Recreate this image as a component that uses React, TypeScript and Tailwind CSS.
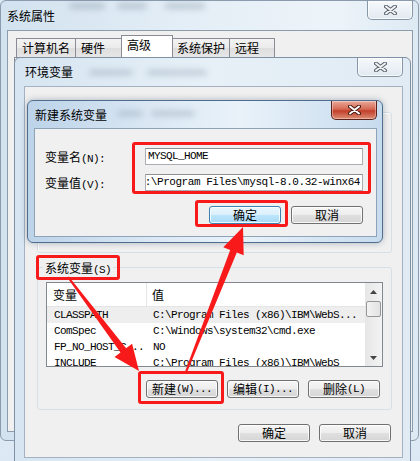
import React from "react"

const mono = "font-['Liberation_Mono',monospace] text-[11px] tracking-[-0.6px]"

function CloseX({ active, className = "" }: { active?: boolean; className?: string }) {
  return (
    <div
      className={`flex h-[19px] w-[46px] shrink-0 items-center justify-center rounded-b-[5px] border border-t-0 ${
        active
          ? "border-[#5e2119] bg-[linear-gradient(#eaa999,#d56a55_45%,#c23f2a_55%,#dc8e75)] shadow-[inset_0_0_0_1px_rgba(255,255,255,0.35)]"
          : "border-[#8797a8] bg-[linear-gradient(#f6f9fc,#e1e9f0)] shadow-[inset_0_0_0_1px_rgba(255,255,255,0.7)]"
      } ${className}`}
    >
      <svg width="13" height="10" viewBox="0 0 13 10">
        <path d="M2 1.5L11 8.5M11 1.5L2 8.5" stroke={active ? "#4a1a12" : "#5b636b"} strokeWidth="4" strokeLinecap="round" />
        <path d="M2 1.5L11 8.5M11 1.5L2 8.5" stroke={active ? "#ffffff" : "#f3f5f7"} strokeWidth="2" strokeLinecap="round" />
      </svg>
    </div>
  )
}

function Btn({ children, primary, className = "" }: { children: React.ReactNode; primary?: boolean; className?: string }) {
  return (
    <div
      className={`flex h-[18px] w-[72px] shrink-0 items-center justify-center rounded-[3px] border leading-none ${
        primary
          ? "border-[#3c7fb1] bg-[linear-gradient(#eaf6fd,#d9f0fc_50%,#bee6fd_50%,#a7d9f5)]"
          : "border-[#707070] bg-[linear-gradient(#f6f6f6,#ededed_50%,#e0e0e0_50%,#d5d5d5)]"
      } shadow-[inset_0_0_0_1px_rgba(255,255,255,0.8)] ${className}`}
    >
      {children}
    </div>
  )
}

// red annotation box
function Mark({ className }: { className: string }) {
  return <div className={`pointer-events-none absolute rounded-[3px] border-[3px] border-[#f81a1a] ${className}`} />
}

function Smudge({ className }: { className: string }) {
  return <div className={`rounded-full bg-[#7d8ea0] opacity-40 blur-[3px] ${className}`} />
}

const rows = [
  ["CLASSPATH", "C:\\Program Files (x86)\\IBM\\WebS..."],
  ["ComSpec", "C:\\Windows\\system32\\cmd.exe"],
  ["FP_NO_HOST_C...", "NO"],
  ["INCLUDE", "C:\\Program Files (x86)\\IBM\\WebS"],
]

const tabs = [
  { label: "计算机名", w: "w-[60px]" },
  { label: "硬件", w: "w-[47px]" },
  { label: "高级", w: "w-[52px]", active: true },
  { label: "系统保护", w: "w-[59px]" },
  { label: "远程", w: "w-[46px]" },
]

export default function App() {
  return (
    <div className="relative h-[461px] w-[420px] overflow-hidden bg-[linear-gradient(180deg,#dbe7f2,#e8f0f7_60%,#dce8f4)] font-['Noto_Sans_CJK_SC',sans-serif] text-[12px] text-black">
      {/* 系统属性 */}
      <div className="absolute left-0 top-0 h-[441px] w-[419px] rounded-[6px] border border-[#8a9bad] bg-[linear-gradient(90deg,#d2e2ef,#e4eef6_45%,#edf4f9_80%,#dde9f3)]">
        <div className="flex h-[29px] items-start">
          <span className="pl-[6px] pt-[7px] leading-[16px]">系统属性</span>
          <Smudge className="ml-[14px] mt-[2px] h-[6px] w-[36px]" />
          <Smudge className="ml-[12px] mt-[2px] h-[6px] w-[30px]" />
          <Smudge className="ml-[18px] mt-[2px] h-[6px] w-[40px]" />
          <CloseX className="ml-auto mr-[5px]" />
        </div>
        <div className="ml-[6px] h-[402px] w-[406px] border border-[#8d9cab] bg-[#f0f0f0] pt-[5px]">
          <div className="flex h-[21px] items-end pl-[9px]">
            {tabs.map((t) => (
              <div
                key={t.label}
                className={`-ml-px flex shrink-0 items-center border border-b-0 border-[#898c95] pl-[5px] leading-[16px] ${t.w} ${
                  t.active
                    ? "relative z-10 -mx-[1px] h-[22px] bg-white pb-[4px]"
                    : "h-[19px] bg-[linear-gradient(#f3f3f3,#ebebeb_50%,#dedede_50%,#e6e6e6)]"
                }`}
              >
                {t.label}
              </div>
            ))}
          </div>
          <div className="ml-[6px] h-[341px] w-[392px] border border-[#898c95] bg-[#f9f9f9]" />
        </div>
      </div>

      {/* 环境变量 */}
      <div className="absolute left-[14px] top-[57px] h-[410px] w-[397px] rounded-t-[6px] border border-[#7f91a4] bg-[linear-gradient(90deg,#d6e5f1,#e7f0f7_50%,#e0ebf4)]">
        <div className="flex h-[28px] items-start">
          <span className="pl-[10px] pt-[6px] leading-[16px]">环境变量</span>
          <Smudge className="ml-[16px] mt-[12px] h-[5px] w-[44px]" />
          <Smudge className="ml-[14px] mt-[12px] h-[5px] w-[60px]" />
          <CloseX className="ml-auto mr-[7px]" />
        </div>
        <div className="ml-[9px] h-[372px] w-[379px] border border-[#a3b1c0] bg-[#f0f0f0]">
          <div className="ml-[12px] mt-[25px] h-[141px] w-[355px] rounded-[3px] border border-[#d5dfe5] shadow-[inset_1px_1px_0_#ffffff]" />
          <fieldset className="ml-[12px] mt-[7px] h-[150px] w-[355px] rounded-[3px] border border-[#d5dfe5]">
            <legend className="ml-[5px] h-[15px]">
              <span className="relative block px-[2px] leading-[15px]">
                系统变量<span className={mono}>(S)</span>
                <Mark className="-left-[7px] -right-[7px] -top-[5px] -bottom-[2px]" />
              </span>
            </legend>
            <div className="ml-[8px] mt-[7px] flex h-[85px] w-[337px] overflow-hidden border border-[#828790] bg-white">
              <div className="flex-1">
                <div className="flex h-[24px] items-center border-b border-[#e5e5e5] leading-[23px]">
                  <div className="w-[100px] border-r border-[#e5e5e5] pl-[6px]">变量</div>
                  <div className="pl-[5px]">值</div>
                </div>
                {rows.map((r, i) => (
                  <div key={r[0]} className={`flex h-[16px] items-center whitespace-pre leading-[16px] ${mono} ${i === 0 ? "bg-[#eeeeee]" : ""}`}>
                    <div className="w-[100px] shrink-0 overflow-hidden pl-[7px]">{r[0]}</div>
                    <div className="pl-[6px]">{r[1]}</div>
                  </div>
                ))}
              </div>
              <div className="flex w-[17px] flex-col bg-[linear-gradient(90deg,#e6e6e6,#f3f3f3)]">
                <div className="flex h-[17px] items-center justify-center">
                  <svg width="7" height="4" viewBox="0 0 7 4"><path d="M3.5 0L7 4H0z" fill="#444" /></svg>
                </div>
                <div className="mx-[1px] mt-[1px] h-[16px] rounded-[2px] border border-[#979797] bg-[linear-gradient(90deg,#f3f3f3,#e2e2e2)]" />
                <div className="mt-auto flex h-[17px] items-center justify-center">
                  <svg width="7" height="4" viewBox="0 0 7 4"><path d="M0 0H7L3.5 4z" fill="#444" /></svg>
                </div>
              </div>
            </div>
            <div className="mt-[13px] flex justify-end gap-[9px] pr-[11px]">
              <div className="relative">
                <Btn>新建<span className={mono}>(W)...</span></Btn>
                <Mark className="-left-[8px] -right-[6px] -top-[9px] -bottom-[6px]" />
              </div>
              <Btn>编辑<span className={mono}>(I)...</span></Btn>
              <Btn>删除<span className={mono}>(L)</span></Btn>
            </div>
          </fieldset>
          <div className="mt-[14px] flex justify-end gap-[9px] pr-[11px]">
            <Btn>确定</Btn>
            <Btn>取消</Btn>
          </div>
        </div>
      </div>

      {/* 新建系统变量 */}
      <div className="absolute left-[27px] top-[100px] h-[143px] w-[356px] rounded-[6px] border border-[#4f6e8e] bg-[linear-gradient(90deg,#bcd3e9,#dbe8f4_35%,#e9f2f9_60%,#c7dbee)] shadow-[0_0_6px_rgba(40,60,90,0.35)]">
        <div className="flex h-[27px] items-start">
          <span className="pl-[7px] pt-[6px] leading-[16px]">新建系统变量</span>
          <Smudge className="ml-[10px] mt-[10px] h-[5px] w-[26px]" />
          <Smudge className="ml-[8px] mt-[10px] h-[5px] w-[44px]" />
          <CloseX active className="ml-auto mr-[5px]" />
        </div>
        <div className="ml-[6px] h-[109px] w-[343px] border border-[#8ea3b9] bg-[#f0f0f0] pl-[10px] pr-[13px] pt-[19px]">
          <div className="flex">
            <div className="flex w-[103px] flex-col gap-[9px]">
              <div className="h-[17px] leading-[17px]">变量名<span className={mono}>(N):</span></div>
              <div className="h-[17px] leading-[17px]">变量值<span className={mono}>(V):</span></div>
            </div>
            <div className="relative flex flex-col gap-[9px]">
              <div className={`h-[17px] w-[218px] border border-[#abadb3] border-t-[#8e8f8f] bg-white pl-[2px] leading-[15px] ${mono}`}>MYSQL_HOME</div>
              <div className={`flex h-[17px] w-[218px] justify-end overflow-hidden whitespace-pre border border-[#abadb3] border-t-[#8e8f8f] bg-white pr-[2px] leading-[15px] ${mono}`}>
                <span className="shrink-0 tracking-[-0.45px]">C:\Program Files\mysql-8.0.32-winx64</span>
              </div>
              <Mark className="-left-[13px] -right-[8px] -top-[6px] -bottom-[3px]" />
            </div>
          </div>
          <div className="mt-[15px] flex justify-end gap-[10px]">
            <div className="relative">
              <Btn primary className="w-[71px]">确定</Btn>
              <Mark className="-left-[14px] -right-[7px] -top-[6px] -bottom-[3px]" />
            </div>
            <Btn className="w-[71px]">取消</Btn>
          </div>
        </div>
      </div>

      {/* arrows */}
      <svg className="pointer-events-none absolute left-0 top-0" width="420" height="461" viewBox="0 0 420 461">
        <polygon
          points="68.8,276.4 126.1,348.2 132.1,343.7 139,371 114.5,356.9 120.5,352.4 67.2,277.6"
          fill="#f81a1a"
        />
        <polygon
          points="186.9,372.4 236.8,252.5 243.7,255.2 243,227 223.3,247.2 230.2,249.9 185.1,371.6"
          fill="#f81a1a"
        />
      </svg>
    </div>
  )
}
